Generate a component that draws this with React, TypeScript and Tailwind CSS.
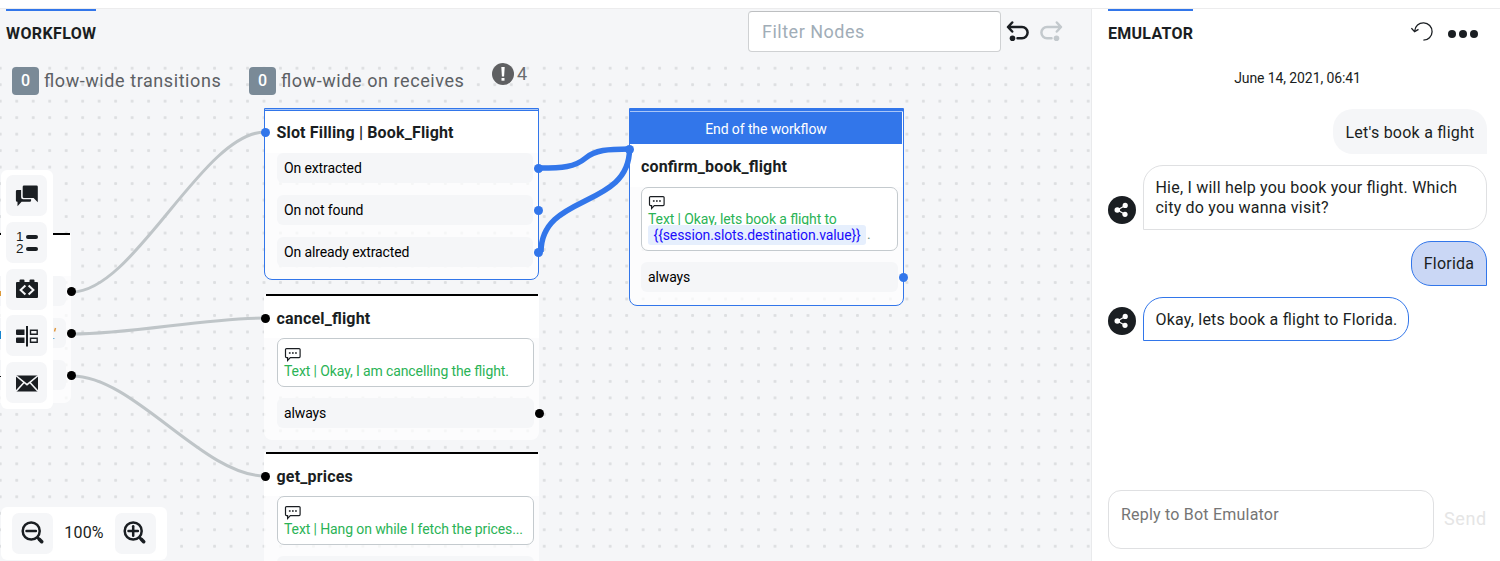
import React from "react";

type Tone = "blue" | "black";

function Port({ tone, className }: { tone: Tone; className: string }) {
  return (
    <span
      className={`absolute z-20 h-[9px] w-[9px] rounded-full ${tone === "blue" ? "bg-[#3276ea]" : "bg-black"} ${className}`}
    />
  );
}

function ChatIcon() {
  return (
    <svg width="18" height="15" viewBox="0 0 18 15" fill="none" stroke="#1a1e22" strokeWidth="1.2" className="block">
      <path d="M2.500 1.600h12.600a1 1 0 0 1 1 1v7a1 1 0 0 1-1 1H6.300L3.600 13.400v-2.800H2.500a1 1 0 0 1-1-1v-7a1 1 0 0 1 1-1z" />
      <path d="M4.900 6h1.700M8 6h1.700M11.100 6h1.700" strokeWidth="1.500" />
    </svg>
  );
}

function Row({ label, tone }: { label: string; tone: Tone }) {
  return (
    <div className="relative flex h-[30px] items-center rounded-[6px] bg-[#f5f6f8] pl-[7px] text-[14px] tracking-[-0.120px] text-black">
      {label}
      <Port tone={tone} className="-right-[10px] top-[11px]" />
    </div>
  );
}

function Card({ children, className }: { children: React.ReactNode; className: string }) {
  return (
    <div className={`rounded-[7px] border border-[#c4cace] bg-white pl-[6px] text-[14px] tracking-[-0.110px] text-[#2bb356] ${className}`}>
      <ChatIcon />
      {children}
    </div>
  );
}

function Tool({ children }: { children: React.ReactNode }) {
  return (
    <button className="flex h-[41px] w-[41px] items-center justify-center rounded-[7px] bg-[#f5f6f8]">
      {children}
    </button>
  );
}

function Toolbar() {
  return (
    <div className="absolute left-[1px] top-[161px] z-30 flex h-[239px] w-[52px] flex-col gap-[5.8px] rounded-[6px] bg-white pl-[5px] pt-[5px]">
      <Tool>
        <svg width="24" height="24" viewBox="0 0 24 24" fill="#1a1e22">
          <path d="M9 1.500h12.500a1.300 1.300 0 0 1 1.300 1.300v15.400L18.600 14H9a1.300 1.300 0 0 1-1.300-1.300V2.800A1.300 1.300 0 0 1 9 1.500z" />
          <path d="M2.200 6h3.900v7.300a2 2 0 0 0 2 2h8v1.200a1.300 1.300 0 0 1-1.300 1.300H6.600l-4.100 4.400v-4.400H2.200A1.300 1.300 0 0 1 .900 16.500V7.300A1.300 1.300 0 0 1 2.200 6z" />
        </svg>
      </Tool>
      <Tool>
        <span className="flex gap-[2px] pt-[2px]">
          <span className="flex w-[8px] flex-col text-right text-[13.500px] font-normal leading-[12px] text-[#1a1e22] [font-family:'Liberation_Sans',sans-serif]">
            <span>1</span>
            <span>2</span>
          </span>
          <span className="flex flex-col gap-[8px] pt-[4px]">
            <span className="h-[4px] w-[12px] rounded-[2px] bg-[#1a1e22]" />
            <span className="h-[4px] w-[12px] rounded-[2px] bg-[#1a1e22]" />
          </span>
        </span>
      </Tool>
      <Tool>
        <svg width="24" height="24" viewBox="0 0 24 24" fill="none">
          <path fill="#1a1e22" d="M2 5h2.500V3.500a1 1 0 0 1 1-1h3a1 1 0 0 1 1 1V5h5V3.500a1 1 0 0 1 1-1h3a1 1 0 0 1 1 1V5H22a1 1 0 0 1 1 1v14a1 1 0 0 1-1 1H2a1 1 0 0 1-1-1V6a1 1 0 0 1 1-1z" />
          <path stroke="#f5f6f8" strokeWidth="2" d="M10.400 8.500L5.600 13l4.800 4.500M13.600 8.500l4.800 4.500-4.800 4.500" />
        </svg>
      </Tool>
      <Tool>
        <svg width="24" height="24" viewBox="0 0 24 24" fill="none">
          <path fill="#1a1e22" d="M2 5.500h7.500v5.500H2a1 1 0 0 1-1-1V6.500a1 1 0 0 1 1-1zM2 13.500h7.500V19H2a1 1 0 0 1-1-1v-3.500a1 1 0 0 1 1-1zM11 2h2v20.500h-2z" />
          <path stroke="#1a1e22" strokeWidth="1.400" d="M15.500 6.200h6.700v4.100h-6.700zM15.500 14.200h6.700v4.100h-6.700z" />
        </svg>
      </Tool>
      <Tool>
        <svg width="24" height="24" viewBox="0 0 24 24">
          <path fill="#1a1e22" d="M1 4.500h22v16H1z" />
          <path fill="none" stroke="#f5f6f8" strokeWidth="1.600" d="M.800 4.500L12 13.600 23.200 4.500M.800 20.500l8-8.800M23.200 20.500l-8-8.800" />
        </svg>
      </Tool>
    </div>
  );
}

function Magnifier({ plus }: { plus?: boolean }) {
  return (
    <svg width="24" height="24" viewBox="0.500 0.500 24 24" fill="none" stroke="#1a1e22">
      <circle cx="10.700" cy="10.500" r="8.500" strokeWidth="2.500" />
      <path d="M17 17l1.700 1.700" strokeWidth="2.500" />
      <path d="M18.800 18.800l2.400 2.400" strokeWidth="3.600" strokeLinecap="round" />
      <path d="M6 10.500h9.400" strokeWidth="2.500" strokeLinecap="round" />
      {plus && <path d="M10.700 5.800v9.400" strokeWidth="2.500" strokeLinecap="round" />}
    </svg>
  );
}

function TurnArrow({ className }: { className: string }) {
  return (
    <svg width="24" height="22" viewBox="0 0 24 22" fill="none" stroke="currentColor" strokeWidth="2.500" strokeLinecap="round" strokeLinejoin="round" className={className}>
      <path d="M6.200 2.500L2 7l4.200 4.500M2.500 7h13.500a5.500 5.500 0 0 1 0 11.200h-4.500" />
      <circle cx="6.500" cy="18.200" r="2.800" fill="currentColor" stroke="none" />
    </svg>
  );
}

function Counter({ label, className }: { label: string; className: string }) {
  return (
    <div className={`flex items-center gap-[5px] ${className}`}>
      <span className="flex h-[28px] w-[27px] shrink-0 items-center justify-center rounded-[4px] bg-[#7a8a97] text-[16px] font-medium text-white">0</span>
      <span className="-mt-[2px] whitespace-nowrap text-[18px] tracking-[0.570px] text-[#5c6064]">{label}</span>
    </div>
  );
}

function Avatar() {
  return (
    <svg width="28" height="28" viewBox="0 0 28 28" className="shrink-0">
      <circle cx="14" cy="14" r="14" fill="#1a1e22" />
      <path d="M17.300 9.400L9.400 14l7.500 4.300" stroke="#fff" strokeWidth="1.200" fill="none" />
      <circle cx="9.300" cy="14" r="2.800" fill="#fff" />
      <circle cx="17.200" cy="9.400" r="2.600" fill="#fff" />
      <circle cx="17" cy="18.300" r="2.600" fill="#fff" />
    </svg>
  );
}

function Flow() {
  return (
    <>
      <div className="absolute -left-[204px] top-[224px] h-[170px] w-[275px] rounded-b-[7px] bg-white/70">
        <div className="mr-[1px] h-[2px] bg-black" />
        <div className="h-[41px] bg-white" />
        <div className="flex flex-col gap-[12px] pl-[12px] pr-[5px]">
          <Row label="" tone="black" />
          <Row label="" tone="black" />
          <Row label="" tone="black" />
        </div>
      </div>
      <svg className="absolute left-0 top-[270px] z-[5]" width="60" height="110" viewBox="0 0 60 110">
        <path d="M0 12h1.300v5H0z" fill="#dc9a3b" />
        <path d="M0 52h1.300v8H0z" fill="#1784cf" />
        <path d="M0 97h1v1H0z" fill="#111" />
        <path d="M55.500 49l-1 3.500" stroke="#e0953a" strokeWidth="1.400" />
        <path d="M53 59.500h1.500" stroke="#70b4dd" strokeWidth="1" />
      </svg>

      <svg className="absolute left-0 top-0 z-10" width="1091" height="552" viewBox="0 9 1091 552" fill="none">
        <g stroke="#bfc5c8" strokeWidth="3">
          <path d="M72 292C134 292 203 132 265 132" />
          <path d="M72 334C134 334 203 318 265 318" />
          <path d="M72 376C134 376 203 476 265 476" />
        </g>
        <g stroke="#3276ea" strokeWidth="5.500">
          <path d="M540 168C562 168 575 167 585 158.500C595 150 608 149 629.500 149" />
          <path d="M541 252C541 193 629.500 209 629.500 149" />
        </g>
      </svg>

      <div className="absolute left-[264px] top-[99px] h-[172px] w-[275px] rounded-b-[8px] border border-[#3276ea] bg-white/70">
        <div className="h-[2px] border-b border-[#3276ea] bg-[#a9c6f7]" />
        <div className="flex h-[42px] items-center bg-white pl-[11.500px] pt-[2px] text-[16px] font-bold tracking-[0.160px] text-[#1a1e22]">Slot Filling | Book_Flight</div>
        <div className="flex flex-col gap-[12px] pl-[12px] pr-[5px]">
          <Row label="On extracted" tone="blue" />
          <Row label="On not found" tone="blue" />
          <Row label="On already extracted" tone="blue" />
        </div>
        <Port tone="blue" className="-left-[4px] top-[19px]" />
      </div>

      <div className="absolute left-[264px] top-[285px] h-[146px] w-[275px] rounded-b-[8px] bg-white/70">
        <div className="ml-[2px] mr-[1px] h-[2px] bg-black" />
        <div className="flex h-[42px] items-center bg-white pl-[12.500px] pt-[4px] text-[16px] font-bold tracking-[0.180px] text-[#1a1e22]">cancel_flight</div>
        <div className="pl-[13px] pr-[5px]">
          <Card className="h-[49px] pt-[8px]"><div className="leading-[18px]">Text | Okay, I am cancelling the flight.</div></Card>
          <div className="mt-[11px]"><Row label="always" tone="black" /></div>
        </div>
        <Port tone="black" className="-left-[3px] top-[20px]" />
      </div>

      <div className="absolute left-[264px] top-[443px] h-[146px] w-[275px] rounded-b-[8px] bg-white/70">
        <div className="ml-[2px] mr-[1px] h-[2px] bg-black" />
        <div className="flex h-[42px] items-center bg-white pl-[12.500px] pt-[4px] text-[16px] font-bold tracking-[0.180px] text-[#1a1e22]">get_prices</div>
        <div className="pl-[13px] pr-[5px]">
          <Card className="h-[49px] pt-[8px]"><div className="leading-[18px]">Text | Hang on while I fetch the prices...</div></Card>
          <div className="mt-[11px] h-[30px] rounded-[6px] bg-[#f5f6f8]" />
        </div>
        <Port tone="black" className="-left-[3px] top-[20px]" />
      </div>

      <div className="absolute left-[629px] top-[99px] h-[198px] w-[275px] rounded-b-[8px] border border-[#3276ea] bg-white/70">
        <div className="h-[3px] border-b border-[#a9c6f7] bg-[#3276ea]" />
        <div className="mr-[1px] flex h-[32px] items-center justify-center bg-[#3276ea] pt-[2px] text-[14px] tracking-[-0.100px] text-white">End of the workflow</div>
        <div className="flex h-[43px] items-center bg-white pl-[11px] pt-[3px] text-[16px] font-bold tracking-[0.170px] text-[#1a1e22]">confirm_book_flight</div>
        <div className="pl-[11px] pr-[5px]">
          <Card className="h-[64px] pt-[7px]">
            <div className="leading-[18px]">Text | Okay, lets book a flight to</div>
            <div className="relative -mt-[4px] flex items-end"><span className="flex h-[20px] w-[218px] items-center rounded-[3px] bg-[#e6effd] pl-[5.500px] text-[#1a0dfb]">{"{{session.slots.destination.value}}"}</span><span className="ml-[1px] text-[#6f8f7c]">.</span></div>
          </Card>
          <div className="mt-[11px]"><Row label="always" tone="blue" /></div>
        </div>
        <Port tone="blue" className="-left-[5px] top-[36px]" />
      </div>
    </>
  );
}

function Workflow() {
  return (
    <section className="relative h-[552px] w-[1091px] shrink-0 overflow-hidden bg-[#f5f6f8] bg-[radial-gradient(circle_at_center,#dddfe1_1.2px,transparent_1.9px)] bg-[length:16.490px_16.490px] bg-[position:-8px_1.500px]">
      <header className="flex h-[51px] items-start bg-[#f5f6f8] pl-[6px]">
        <h1 className="w-[742px] text-[16px] font-bold tracking-[0.380px] text-[#1a1e22]">
          <span className="inline-block border-t-2 border-[#3276ea] pt-[11px]">WORKFLOW</span>
        </h1>
        <div className="mt-[2px] flex h-[41px] w-[253px] items-center rounded-[4px] border border-[#cfd1d3] border-t-[#bdbfc1] bg-white pl-[13px] text-[18px] tracking-[0.500px] text-[#a1adb7]">Filter Nodes</div>
        <TurnArrow className="ml-[5px] mt-[11px] text-[#1a1e22]" />
        <TurnArrow className="ml-[9px] mt-[11px] -scale-x-100 text-[#c3c9cd]" />
      </header>
      <div className="flex items-center pl-[12px] pt-[7px]">
        <Counter label="flow-wide transitions" className="w-[237px]" />
        <Counter label="flow-wide on receives" className="w-[243px]" />
        <div className="-mt-[15px] flex items-center gap-[3px] text-[18px] text-[#6a6d70]">
          <svg width="22" height="22" viewBox="0 0 22 22">
            <circle cx="11" cy="11" r="11" fill="#5f6062" />
            <path d="M9.300 4h3.400l-.600 9.500H9.900z" fill="#fff" />
            <path d="M9.500 15h3v2.700h-3z" fill="#fff" />
          </svg>
          4
        </div>
      </div>
      <Flow />
      <Toolbar />
      <div className="absolute left-[1px] top-[498px] z-30 flex h-[53px] w-[166px] items-center justify-between rounded-[6px] bg-white px-[11px] pb-px text-[16px] tracking-[0.250px] text-[#1a1e22]">
        <Tool><Magnifier /></Tool>
        <span>100%</span>
        <Tool><Magnifier plus /></Tool>
      </div>
    </section>
  );
}

function Emulator() {
  return (
    <aside className="flex h-[552px] flex-1 flex-col border-l border-[#e9eaec] bg-white pl-[16px] pr-[13px] text-[16px] tracking-[0.210px] text-[#1a1e22]">
      <header className="flex h-[51px] items-start">
        <h2 className="border-t-2 border-[#3276ea] pt-[11px] font-bold tracking-[0.260px]">EMULATOR</h2>
        <svg className="ml-auto mr-[15px] mt-[12px]" width="22" height="21" viewBox="0 0 22 21" fill="none" stroke="#1a1e22" strokeWidth="1.300">
          <path d="M3.700 10a8.700 8.700 0 1 1 8.700 9.200" />
          <path d="M.400 7.200l3.200 3.400 3.900-2.200" />
        </svg>
        <svg className="mr-[9px] mt-[21px]" width="30" height="8" viewBox="0 0 30 8" fill="#1a1e22">
          <circle cx="4" cy="4" r="4" /><circle cx="15" cy="4" r="4" /><circle cx="26" cy="4" r="4" />
        </svg>
      </header>
      <p className="mt-[8px] text-center text-[14px] leading-[20px] tracking-[-0.100px]">June 14, 2021, 06:41</p>
      <div className="mt-[21px] flex h-[45px] w-[154px] items-center justify-center self-end rounded-[20px] rounded-br-none bg-[#f5f6f8] pt-[2px] tracking-[0.240px]">Let's book a flight</div>
      <div className="mt-[11px] flex items-end gap-[7px]">
        <div className="mb-[6px]"><Avatar /></div>
        <div className="h-[65px] w-[344px] whitespace-nowrap rounded-[20px] rounded-bl-none border border-[#dfe0e2] pl-[11.500px] pt-[12px] leading-[20px]">Hie, I will help you book your flight. Which<br />city do you wanna visit?</div>
      </div>
      <div className="mt-[11px] flex h-[45px] w-[76px] items-center justify-center self-end rounded-[20px] rounded-br-none border border-[#3276ea] bg-[#cad7f5]">Florida</div>
      <div className="mt-[11px] flex items-end gap-[7px]">
        <div className="mb-[6px]"><Avatar /></div>
        <div className="flex h-[44px] w-[266px] items-center rounded-[20px] rounded-bl-none border border-[#3276ea] pl-[11.500px] pt-px">Okay, lets book a flight to Florida.</div>
      </div>
      <div className="mb-[12px] mt-auto flex items-center">
        <div className="h-[59px] w-[326px] shrink-0 rounded-[13px] border border-[#dfe0e2] pl-[12px] pt-[12px] text-[#757575]">Reply to Bot Emulator</div>
        <span className="-mt-[2px] ml-[10px] text-[18px] tracking-[0.600px] text-[#e5e5e5]">Send</span>
      </div>
    </aside>
  );
}

export default function App() {
  return (
    <main className="flex h-[561px] w-[1500px] flex-col overflow-hidden bg-white [font-family:Roboto,'Liberation_Sans',sans-serif] [font-feature-settings:'liga']">
      <div className="h-[9px] shrink-0 border-b border-[#ececed]" />
      <div className="flex">
        <Workflow />
        <Emulator />
      </div>
    </main>
  );
}
